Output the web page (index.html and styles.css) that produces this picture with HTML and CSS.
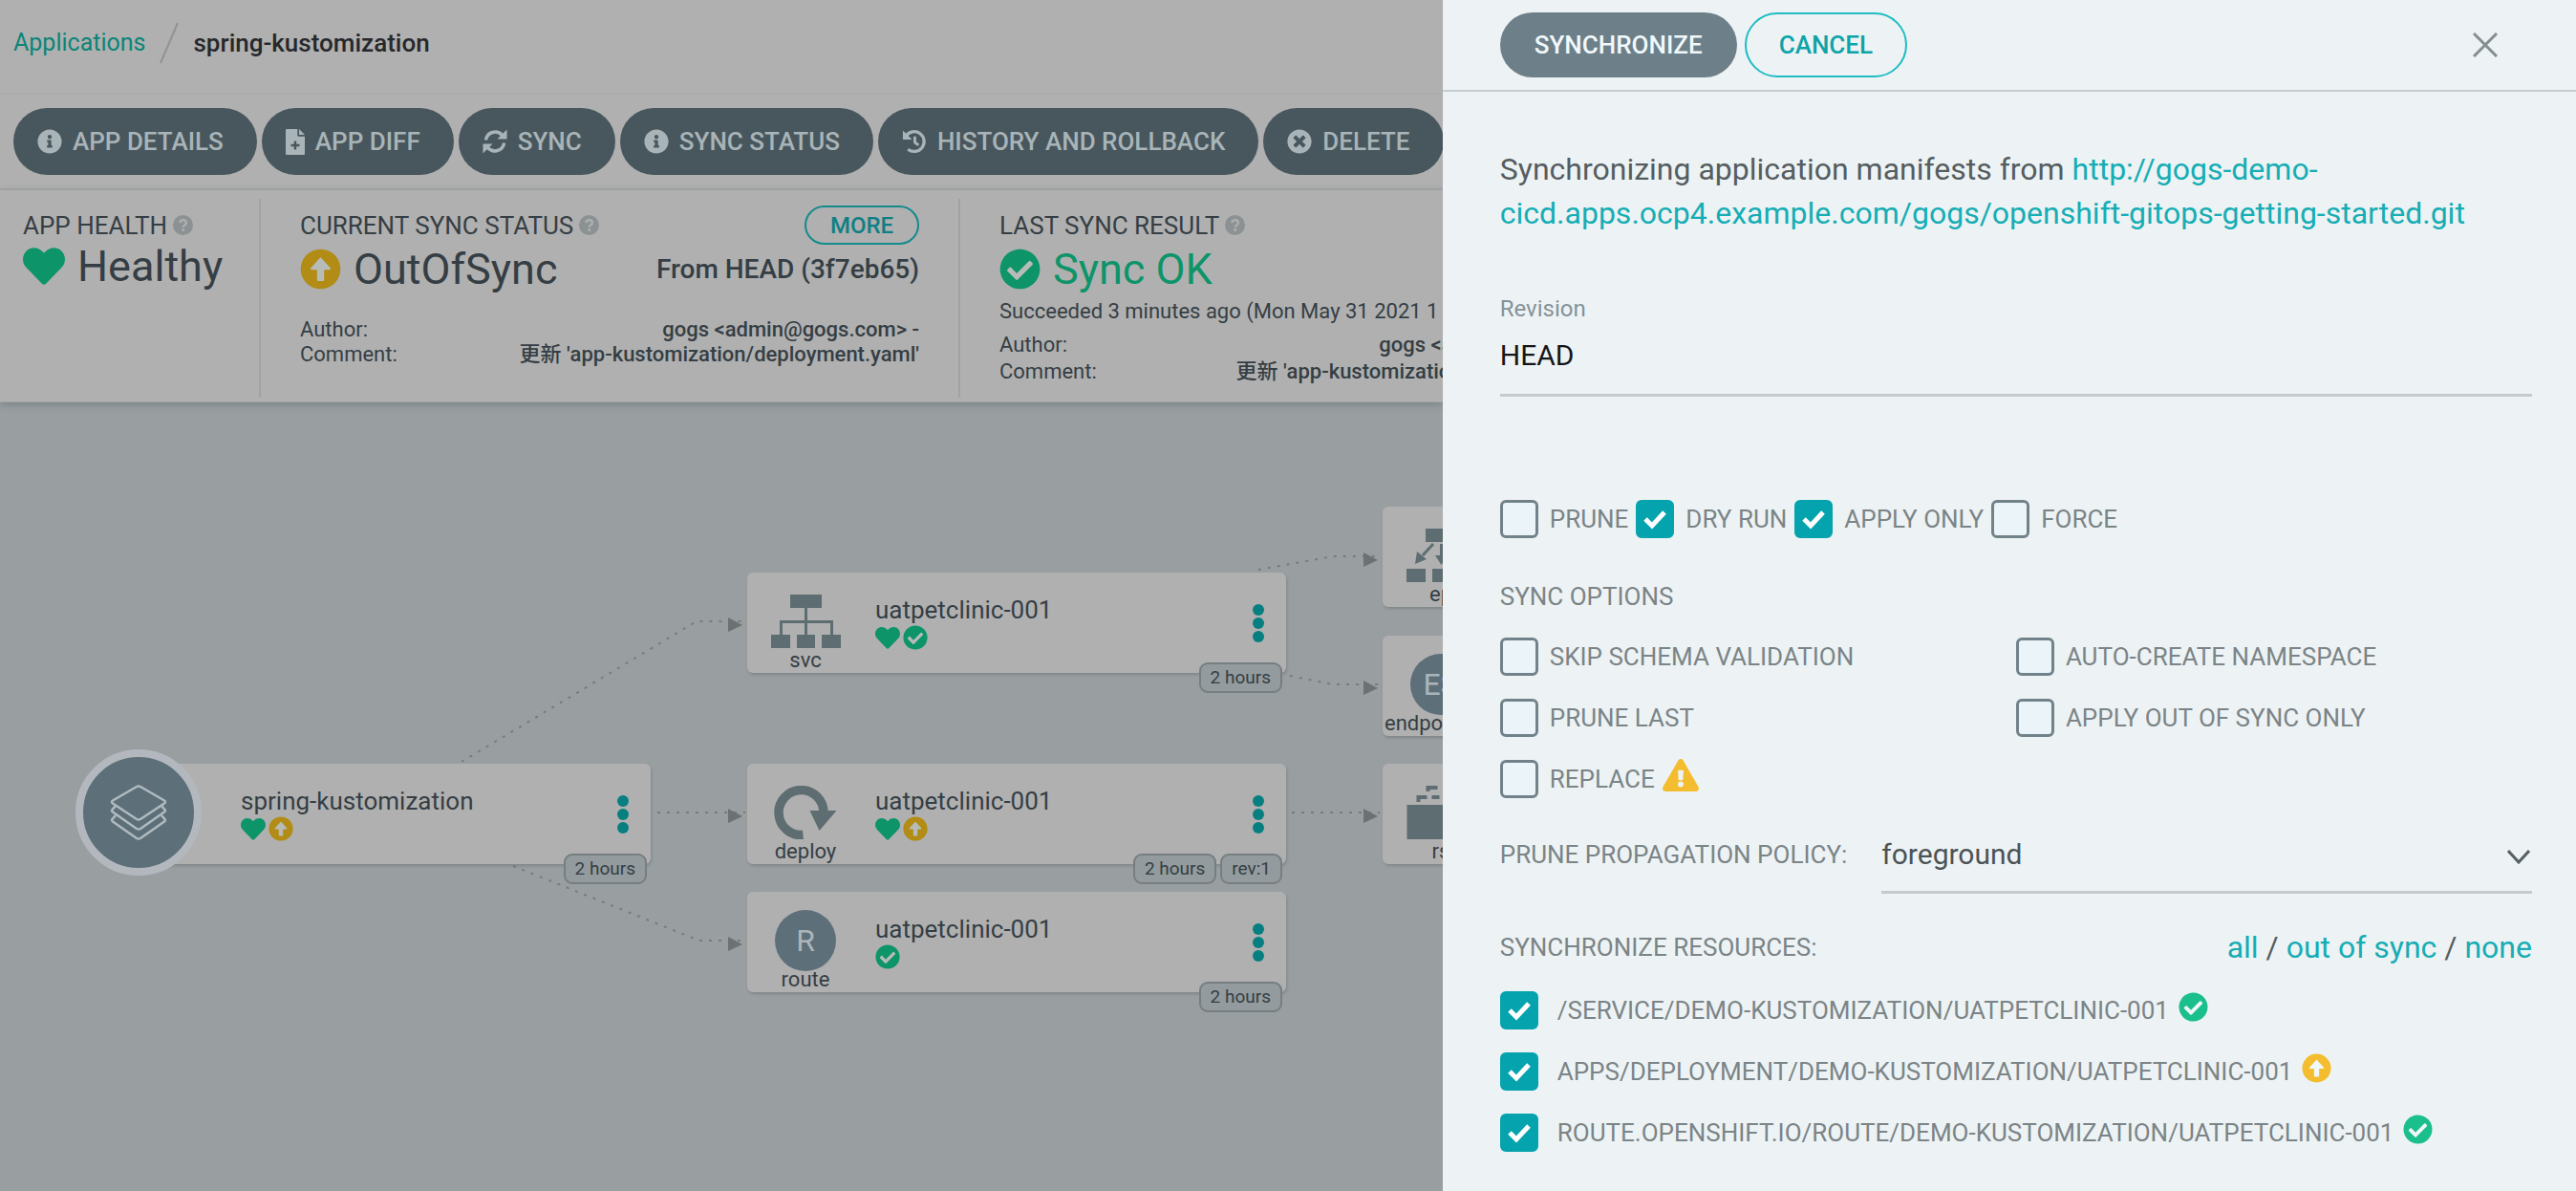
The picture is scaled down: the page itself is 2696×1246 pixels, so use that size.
FILE: index.html
```html
<!DOCTYPE html>
<html lang="en">
<head>
<meta charset="utf-8">
<title>spring-kustomization</title>
<link rel="stylesheet" href="styles.css">
</head>
<body>
<svg class="defs" aria-hidden="true">
  <symbol id="i-info" viewBox="0 0 512 512"><path d="M256 8C119.043 8 8 119.083 8 256c0 136.997 111.043 248 248 248s248-111.003 248-248C504 119.083 392.957 8 256 8zm0 110c23.196 0 42 18.804 42 42s-18.804 42-42 42-42-18.804-42-42 18.804-42 42-42zm56 254c0 6.627-5.373 12-12 12h-88c-6.627 0-12-5.373-12-12v-24c0-6.627 5.373-12 12-12h12v-64h-12c-6.627 0-12-5.373-12-12v-24c0-6.627 5.373-12 12-12h64c6.627 0 12 5.373 12 12v100h12c6.627 0 12 5.373 12 12v24z"/></symbol>
  <symbol id="i-check" viewBox="0 0 512 512"><path fill="currentColor" d="M504 256c0 136.967-111.033 248-248 248S8 392.967 8 256 119.033 8 256 8s248 111.033 248 248z"/><path fill="var(--mark)" d="M227.314 387.314l184-184c6.248-6.248 6.248-16.379 0-22.627l-22.627-22.627c-6.248-6.249-16.379-6.249-22.628 0L216 308.118l-70.059-70.059c-6.248-6.248-16.379-6.248-22.628 0l-22.627 22.627c-6.248 6.248-6.248 16.379 0 22.627l104 104c6.249 6.249 16.379 6.249 22.628.001z"/></symbol>
  <symbol id="i-up" viewBox="0 0 512 512"><circle cx="256" cy="256" r="248" fill="currentColor"/><path fill="var(--mark)" d="M212 392V264h-66c-14 0-20-14-11-24L246 118c6-6 14-6 20 0l111 122c9 10 3 24-11 24h-66v128c0 8-6 14-14 14h-60c-8 0-14-6-14-14z"/></symbol>
  <symbol id="i-heart" viewBox="0 20 512 460"><path d="M462.3 62.6C407.5 15.9 326 24.3 275.7 76.2L256 96.5l-19.7-20.3C186.1 24.3 104.5 15.9 49.7 62.6c-62.8 53.6-66.1 149.8-9.9 207.9l193.5 199.8c12.5 12.9 32.8 12.9 45.3 0l193.5-199.8c56.3-58.1 53-154.3-9.8-207.9z"/></symbol>
  <symbol id="i-times" viewBox="0 0 512 512"><path d="M256 8C119 8 8 119 8 256s111 248 248 248 248-111 248-248S393 8 256 8zm121.6 313.1c4.7 4.7 4.7 12.3 0 17L338 377.6c-4.7 4.7-12.3 4.7-17 0L256 312l-65.1 65.6c-4.7 4.7-12.3 4.7-17 0L134.4 338c-4.7-4.7-4.7-12.3 0-17l65.6-65-65.6-65.1c-4.7-4.7-4.7-12.3 0-17l39.6-39.6c4.7-4.7 12.3-4.7 17 0l65 65.7 65.1-65.6c4.7-4.7 12.3-4.7 17 0l39.6 39.6c4.7 4.7 4.7 12.3 0 17L312 256l65.6 65.1z"/></symbol>
  <symbol id="i-warn" viewBox="0 0 576 512"><path d="M569.517 440.013C587.975 472.007 564.806 512 527.94 512H48.054c-36.937 0-59.999-40.055-41.577-71.987L246.423 23.985c18.467-32.009 64.72-31.951 83.154 0l239.94 416.028zM288 354c-25.405 0-46 20.595-46 46s20.595 46 46 46 46-20.595 46-46-20.595-46-46-46zm-43.673-165.346l7.418 136c.347 6.364 5.609 11.346 11.982 11.346h48.546c6.373 0 11.635-4.982 11.982-11.346l7.418-136c.375-6.874-5.098-12.654-11.982-12.654h-63.383c-6.884 0-12.356 5.78-11.981 12.654z"/></symbol>
  <symbol id="i-file" viewBox="0 0 20 27"><path fill-rule="evenodd" d="M1.300 0H12.300V6.500C12.300 7.300 12.800 7.800 13.600 7.800H20V25.700C20 26.400 19.400 27 18.700 27H1.300C.6 27 0 26.400 0 25.700V1.300C0 .6.600 0 1.300 0zM8.800 12.500V15.800H5.500V18.200H8.800V21.500H11.200V18.200H14.500V15.800H11.200V12.500z"/><path d="M14 0l6 6h-6z"/></symbol>
  <symbol id="i-sync" viewBox="0 0 27 27"><path d="M3.500 12A10.300 10.300 0 0 1 21.500 6.800M23.500 15A10.300 10.300 0 0 1 5.500 20.200" fill="none" stroke="currentColor" stroke-width="3.600"/><path d="M26.500 0.500v10.500h-10.500zM0.500 26.500V16H11z"/></symbol>
  <symbol id="i-history" viewBox="0 0 27 27"><path d="M4.500 7.200A10.800 10.800 0 1 1 6.500 22" fill="none" stroke="currentColor" stroke-width="3.400"/><path d="M1 1.500v10h10z"/><path d="M14 8v6.500l4 3" fill="none" stroke="currentColor" stroke-width="3"/></symbol>
  <symbol id="i-help" viewBox="0 0 22 22"><circle cx="11" cy="11" r="11"/><path d="M7.600 8.300c.5-2 1.800-2.900 3.500-2.900 2 0 3.500 1.200 3.500 3 0 2.700-3.400 2.700-3.400 5" fill="none" stroke="#b0b0b0" stroke-width="2.400"/><circle cx="11.200" cy="16.200" r="1.600" fill="#b0b0b0"/></symbol>
  <symbol id="i-layers" viewBox="0 0 60 60"><g fill="none" stroke="currentColor" stroke-width="2.500" stroke-linejoin="round"><path d="M28 3L3 17.500q-2 1.500 0 3L28 37q2 1.200 4 0l25-16.500q2-1.500 0-3L32 3q-2-1.200-4 0z"/><path d="M6 23l-3 3.500q-2 1.500 0 3L28 47q2 1.200 4 0l25-17.500q2-1.500 0-3L54 23"/><path d="M6 33l-3 3.500q-2 1.500 0 3L28 57q2 1.200 4 0l25-17.500q2-1.500 0-3L54 33"/></g></symbol>
  <symbol id="i-svc" viewBox="0 0 73 56"><path d="M20 0h33v14H20zM0 42h20v14H0zM27 42h19v14H27zM53 42h20v14H53z"/><path d="M36.500 14v28M10.500 42V28.500h53V42" fill="none" stroke="currentColor" stroke-width="3"/></symbol>
  <symbol id="i-deploy" viewBox="0 0 64 56"><path d="M29 51.500A23.500 23.500 0 1 1 50.500 28" fill="none" stroke="currentColor" stroke-width="9.500"/><path d="M36 26h28L46 47z"/></symbol>
  <symbol id="i-ep" viewBox="0 0 73 56"><path d="M20 0h33v14H20zM0 42h20v14H0zM27 42h19v14H27zM53 42h20v14H53z"/><path d="M9 37l2-13 10 8zM30 28h13l-6.500 10zM64 37l-2-13-10 8z"/><path d="M28 16L17 28M36.500 16v14M45 16l11 12" fill="none" stroke="currentColor" stroke-width="3"/></symbol>
  <symbol id="i-rs" viewBox="0 0 72 56"><path d="M0 20h50v36H0z"/><path d="M12 17v-5h9M26 12h8M46 12h9v9M22 6V2h10M38 2h8M56 2h9v8M65 18v10h-7" fill="none" stroke="currentColor" stroke-width="4"/></symbol>
</svg>

<div class="app">
  <main class="page">
    <nav class="crumbs" aria-label="Breadcrumb">
      <a href="#">Applications</a>
      <svg class="slash" viewBox="0 0 20 44" aria-hidden="true"><path d="M19 1L1 43"/></svg>
      <span>spring-kustomization</span>
    </nav>
    <div class="toolbar">
      <button class="tool"><svg class="ic"><use href="#i-info"/></svg>APP DETAILS</button>
      <button class="tool"><svg class="ic file"><use href="#i-file"/></svg>APP DIFF</button>
      <button class="tool"><svg class="ic"><use href="#i-sync"/></svg>SYNC</button>
      <button class="tool"><svg class="ic"><use href="#i-info"/></svg>SYNC STATUS</button>
      <button class="tool"><svg class="ic"><use href="#i-history"/></svg>HISTORY AND ROLLBACK</button>
      <button class="tool"><svg class="ic"><use href="#i-times"/></svg>DELETE</button>
    </div>
    <div class="summary">
      <section class="cell health">
        <h2>APP HEALTH <svg class="help"><use href="#i-help"/></svg></h2>
        <p class="state"><svg class="heart"><use href="#i-heart"/></svg>Healthy</p>
      </section>
      <section class="cell current">
        <div class="head"><h2>CURRENT SYNC STATUS <svg class="help"><use href="#i-help"/></svg></h2><button class="more">MORE</button></div>
        <div class="head"><p class="state"><svg class="dot warn"><use href="#i-up"/></svg>OutOfSync</p><b class="from">From HEAD (3f7eb65)</b></div>
        <dl class="meta">
          <dt>Author:</dt><dd>gogs &lt;admin@gogs.com&gt; -</dd>
          <dt>Comment:</dt><dd>更新 'app-kustomization/deployment.yaml'</dd>
        </dl>
      </section>
      <section class="cell last">
        <div class="head"><h2>LAST SYNC RESULT <svg class="help"><use href="#i-help"/></svg></h2></div>
        <p class="state good"><svg class="dot"><use href="#i-check"/></svg>Sync OK</p>
        <p class="when">Succeeded 3 minutes ago (Mon May 31 2021 1</p>
        <dl class="meta">
          <dt>Author:</dt><dd>gogs &lt;admin@gogs.com&gt; -</dd>
          <dt>Comment:</dt><dd>更新 'app-kustomization/deployment.yaml'</dd>
        </dl>
      </section>
    </div>
    <div class="canvas">
      <svg class="edges" aria-hidden="true">
        <g class="lines">
          <path d="M483 376L729 229H780"/><path d="M688 429H780"/><path d="M537 485L732 563H780"/>
          <path d="M1317 175L1395 161H1444"/><path d="M1350 286L1395 295H1444"/><path d="M1352 429H1444"/>
        </g>
        <path d="M762 225l15 8-15 7zM762 425l15 8-15 7zM762 559l15 8-15 7zM1427 157l15 8-15 7zM1427 291l15 8-15 7zM1427 425l15 8-15 7z"/>
      </svg>
      <article class="node root n-root">
        <div class="ball"><svg class="layers"><use href="#i-layers"/></svg></div>
        <div class="body"><span class="name">spring-kustomization</span><span class="marks"><svg class="mheart"><use href="#i-heart"/></svg><svg class="mdot warn"><use href="#i-up"/></svg></span></div>
        <button class="kebab" aria-label="Actions"><i></i><i></i><i></i></button>
        <div class="tags"><span>2 hours</span></div>
      </article>
      <article class="node n-svc">
        <div class="kind"><svg class="kic"><use href="#i-svc"/></svg><span>svc</span></div>
        <div class="body"><span class="name">uatpetclinic-001</span><span class="marks"><svg class="mheart"><use href="#i-heart"/></svg><svg class="mdot"><use href="#i-check"/></svg></span></div>
        <button class="kebab" aria-label="Actions"><i></i><i></i><i></i></button>
        <div class="tags"><span>2 hours</span></div>
      </article>
      <article class="node n-deploy">
        <div class="kind"><svg class="kic"><use href="#i-deploy"/></svg><span>deploy</span></div>
        <div class="body"><span class="name">uatpetclinic-001</span><span class="marks"><svg class="mheart"><use href="#i-heart"/></svg><svg class="mdot warn"><use href="#i-up"/></svg></span></div>
        <button class="kebab" aria-label="Actions"><i></i><i></i><i></i></button>
        <div class="tags"><span>2 hours</span><span>rev:1</span></div>
      </article>
      <article class="node n-route">
        <div class="kind"><div class="letter">R</div><span>route</span></div>
        <div class="body"><span class="name">uatpetclinic-001</span><span class="marks"><svg class="mdot"><use href="#i-check"/></svg></span></div>
        <button class="kebab" aria-label="Actions"><i></i><i></i><i></i></button>
        <div class="tags"><span>2 hours</span></div>
      </article>
      <article class="node n-ep"><div class="kind"><svg class="kic"><use href="#i-ep"/></svg><span>ep</span></div></article>
      <article class="node n-slice"><div class="kind"><div class="letter">ES</div><span>endpointslice</span></div></article>
      <article class="node n-rs"><div class="kind"><svg class="kic"><use href="#i-rs"/></svg><span>rs</span></div></article>
    </div>
  </main>

  <aside class="panel">
    <header class="bar">
      <button class="primary">SYNCHRONIZE</button>
      <button class="outline">CANCEL</button>
      <button class="close" aria-label="Close"><svg viewBox="0 0 26 26"><path d="M1 1l24 24M25 1L1 25"/></svg></button>
    </header>
    <form class="form">
      <p class="intro">Synchronizing application manifests from <a href="#">http://gogs-demo-cicd.apps.ocp4.example.com/gogs/openshift-gitops-getting-started.git</a></p>
      <div class="field">
        <label for="rev">Revision</label>
        <input id="rev" type="text" value="HEAD">
      </div>
      <div class="flags">
        <label class="opt"><input type="checkbox">PRUNE</label>
        <label class="opt"><input type="checkbox" checked>DRY RUN</label>
        <label class="opt"><input type="checkbox" checked>APPLY ONLY</label>
        <label class="opt"><input type="checkbox">FORCE</label>
      </div>
      <h3>SYNC OPTIONS</h3>
      <div class="options">
        <label class="opt"><input type="checkbox">SKIP SCHEMA VALIDATION</label>
        <label class="opt"><input type="checkbox">AUTO-CREATE NAMESPACE</label>
        <label class="opt"><input type="checkbox">PRUNE LAST</label>
        <label class="opt"><input type="checkbox">APPLY OUT OF SYNC ONLY</label>
        <label class="opt"><input type="checkbox">REPLACE<svg class="caution"><use href="#i-warn"/></svg></label>
      </div>
      <div class="policy">
        <label for="pol">PRUNE PROPAGATION POLICY:</label>
        <div class="select">
          <select id="pol"><option>foreground</option></select>
          <svg class="chev" viewBox="0 0 24 15" aria-hidden="true"><path d="M1 1l11 12L23 1"/></svg>
        </div>
      </div>
      <div class="reshead">
        <h3>SYNCHRONIZE RESOURCES:</h3>
        <div class="pick"><a href="#">all</a> / <a href="#">out of sync</a> / <a href="#">none</a></div>
      </div>
      <div class="resources">
        <label class="opt"><input type="checkbox" checked>/SERVICE/DEMO-KUSTOMIZATION/UATPETCLINIC-001<svg class="rdot"><use href="#i-check"/></svg></label>
        <label class="opt"><input type="checkbox" checked>APPS/DEPLOYMENT/DEMO-KUSTOMIZATION/UATPETCLINIC-001<svg class="rdot warn"><use href="#i-up"/></svg></label>
        <label class="opt"><input type="checkbox" checked>ROUTE.OPENSHIFT.IO/ROUTE/DEMO-KUSTOMIZATION/UATPETCLINIC-001<svg class="rdot"><use href="#i-check"/></svg></label>
      </div>
    </form>
  </aside>
</div>
</body>
</html>
```
FILE: styles.css
```css
* { box-sizing: border-box; }
body {
  margin: 0;
  font-family: Roboto, "Noto Sans CJK SC", sans-serif;
  font-size: 26px;
  color: #353e44;
  background: #999fa1;
}
h2, h3, p, dl, dd { margin: 0; font-weight: 400; font-size: inherit; }
button, input, select { font: inherit; margin: 0; }
button { cursor: pointer; border: 0; }
a { text-decoration: none; }
svg { display: block; fill: currentColor; flex: none; }
.defs { position: absolute; width: 0; height: 0; }

.app { display: grid; grid-template-columns: 56fr 44fr; min-height: 100vh; }

/* Application page, dimmed behind the panel */
.page {
  --mark: #b8bcb9;
  display: flex;
  flex-direction: column;
  min-width: 0;
  overflow: hidden;
  background: #999fa1;
}
.crumbs {
  display: flex;
  align-items: center;
  height: 99px;
  padding: 0 14px 9px;
  gap: 15px;
  background: #b0b0b0;
  border-bottom: 1px solid #a9abab;
  color: #26282c;
  font-weight: 500;
}
.crumbs a { color: #0b8577; font-size: 25px; font-weight: 400; }
.slash { width: 20px; height: 44px; fill: none; stroke: #8f9494; stroke-width: 2; }
.toolbar {
  display: flex;
  gap: 5px;
  padding: 14px 0 14px 14px;
  background: #b0b0b0;
  border-bottom: 2px solid #a7a9a9;
}
.tool {
  display: flex;
  align-items: center;
  gap: 11px;
  flex: none;
  height: 70px;
  padding: 0 35px 0 25px;
  border-radius: 35px;
  background: #48575d;
  color: #a9b4b8;
  font-weight: 500;
  white-space: nowrap;
}
.ic { width: 26px; height: 26px; }
.ic.file { width: 20px; height: 27px; }
.summary {
  display: flex;
  height: 222px;
  padding: 9px 0 4px;
  background: #b0b0b0;
  border-bottom: 1px solid #a3a6a7;
  box-shadow: 0 2px 8px rgba(60, 70, 75, .35);
}
.cell { flex: none; padding: 7px 41px 0; border-right: 2px solid #9fa3a4; }
.cell h2 { display: flex; align-items: center; gap: 6px; height: 41px; white-space: nowrap; }
.health { width: 273px; padding-left: 24px; padding-right: 0; }
.current { width: 732px; }
.last { width: 748px; border-right: 0; }
.help { width: 21px; height: 21px; color: #8c9293; }
.head { display: flex; justify-content: space-between; align-items: center; }
.more {
  width: 120px;
  height: 41px;
  border: 2px solid #138a8c;
  border-radius: 21px;
  background: none;
  color: #0e7f84;
  font-size: 24px;
  font-weight: 500;
  padding: 0;
}
.state { display: flex; align-items: center; gap: 13px; height: 44px; font-size: 45px; }
.current .state, .last .state { height: 50px; }
.heart { width: 44px; height: 40px; color: #0d9469; }
.dot { width: 43px; height: 43px; color: #0d9469; }
.warn { color: #b28c14; }
.good { color: #0d9469; }
.from { font-size: 28px; font-weight: 500; }
.meta {
  display: grid;
  grid-template-columns: auto 1fr;
  font-size: 22px;
  line-height: 26px;
}
.current .meta { padding-top: 26px; }
.last .meta { line-height: 28px; padding-top: 8px; }
.meta dd { text-align: right; font-weight: 500; white-space: nowrap; }
.when { padding-top: 7px; font-size: 22px; line-height: 26px; white-space: nowrap; }

.canvas { position: relative; flex: 1; min-height: 800px; }
.edges { position: absolute; inset: 0; width: 100%; height: 100%; color: #6c7172; }
.lines { fill: none; stroke: #777d7e; stroke-width: 2; stroke-dasharray: 3 7; }
.node {
  position: absolute;
  left: 782px;
  display: flex;
  width: 564px;
  height: 105px;
  border-radius: 6px;
  background: #b0b0b0;
  box-shadow: 1px 2px 3px rgba(90, 100, 105, .4);
}
.n-root { left: 145px; top: 378px; width: 536px; }
.n-svc { top: 178px; }
.n-deploy { top: 378px; }
.n-route { top: 512px; }
.n-ep { left: 1447px; top: 109px; }
.n-slice { left: 1447px; top: 244px; }
.n-rs { left: 1447px; top: 378px; }
.kind {
  display: flex;
  flex-direction: column;
  justify-content: flex-end;
  align-items: center;
  width: 122px;
  font-size: 22px;
  line-height: 26px;
}
.kind span { max-width: 118px; white-space: nowrap; }
.kic { width: 73px; height: 56px; color: #5d6d71; }
.letter {
  display: grid;
  place-items: center;
  width: 64px;
  height: 64px;
  margin-bottom: -4px;
  border-radius: 50%;
  background: #5d6f78;
  color: #aab5ba;
  font-size: 32px;
}
.body { flex: 1; padding: 23px 0 0 12px; }
.name { display: block; line-height: 32px; }
.marks { display: flex; gap: 3px; }
.mheart { width: 26px; height: 24px; color: #0d9469; margin-top: 1px; }
.mdot { width: 26px; height: 26px; color: #0d9469; }
.mdot.warn { color: #b28c14; }
.kebab {
  display: flex;
  flex-direction: column;
  gap: 2px;
  align-self: flex-start;
  margin-top: 33px;
  padding: 0 23px 0 0;
  background: none;
}
.kebab i { width: 12px; height: 12px; border-radius: 50%; background: #077f80; }
.tags { position: absolute; right: 4px; bottom: -21px; display: flex; gap: 4px; }
.tags span {
  padding: 0 10px;
  border: 2px solid #767e81;
  border-radius: 9px;
  background: #939b9e;
  font-size: 19px;
  line-height: 28px;
}
.ball {
  position: absolute;
  left: -66px;
  top: -15px;
  display: grid;
  place-items: center;
  width: 132px;
  height: 132px;
  border: 8px solid #b2b8be;
  border-radius: 50%;
  background: #5d6f78;
  color: #b0bbc0;
}
.layers { width: 60px; height: 60px; }
.root .body { padding-left: 107px; }

/* Synchronize panel */
.panel { --mark: #f2f7f7; background: #edf3f4; color: #555d61; min-width: 0; }
.bar {
  display: flex;
  align-items: center;
  gap: 8px;
  height: 96px;
  padding: 0 82px 0 60px;
  border-bottom: 2px solid #c6cdd0;
}
.bar button { font-weight: 500; }
.primary, .outline { height: 68px; border-radius: 34px; padding: 0 36px; }
.primary { background: #6d7f88; color: #f0f8fa; }
.outline { background: none; border: 2px solid #1fbcc4; color: #0da4a9; padding: 0 34px; }
.close { margin-left: auto; padding: 0; background: none; }
.close svg { width: 26px; height: 26px; fill: none; stroke: #848d90; stroke-width: 3; }
.form { padding: 58px 46px 0 60px; }
.intro { font-size: 32px; line-height: 46px; }
.intro a, .pick a { color: #16adb5; }
.field { padding-top: 61px; }
.field label { display: block; font-size: 24px; line-height: 32px; color: #85929a; }
.field input {
  display: block;
  width: 100%;
  height: 76px;
  padding: 0 0 9px;
  border: 0;
  border-bottom: 3px solid #c5caca;
  background: none;
  color: #14171a;
  font-size: 30px;
}
.opt { display: flex; align-items: center; gap: 12px; height: 40px; color: #7b8487; white-space: nowrap; }
.opt input {
  appearance: none;
  flex: none;
  width: 40px;
  height: 40px;
  border: 3px solid #72828a;
  border-radius: 6px;
  background: #eaf4f9;
}
.opt input:checked {
  border-color: #05a3ae;
  background: #05a3ae url("data:image/svg+xml,%3Csvg xmlns='http://www.w3.org/2000/svg' viewBox='0 0 34 34'%3E%3Cpath d='M7 17l7 7L27 10' fill='none' stroke='%23fff' stroke-width='5'/%3E%3C/svg%3E") center / 34px 34px no-repeat;
}
.flags { display: flex; gap: 8px; padding-top: 108px; }
h3 { color: #7b8487; line-height: 32px; }
.form > h3 { margin-top: 45px; }
.options { display: grid; grid-template-columns: 1fr 1fr; row-gap: 24px; padding-top: 27px; }
.caution { width: 38px; height: 34px; margin: -8px 0 0 -4px; color: #f4bd2f; }
.policy { display: flex; gap: 36px; margin-top: 31px; color: #7b8487; }
.policy label { line-height: 56px; white-space: nowrap; }
.select { position: relative; flex: 1; border-bottom: 3px solid #c5caca; height: 69px; }
.select select {
  appearance: none;
  width: 100%;
  height: 54px;
  padding: 0;
  border: 0;
  background: none;
  color: #4b5357;
  font-size: 30px;
}
.chev { position: absolute; right: 2px; top: 23px; width: 24px; height: 15px; fill: none; stroke: #566064; stroke-width: 3; }
.reshead { display: flex; justify-content: space-between; align-items: center; margin-top: 33px; height: 46px; }
.pick { font-size: 32px; }
.resources { display: grid; row-gap: 24px; padding-top: 23px; }
.resources .opt { gap: 20px; }
.rdot { width: 31px; height: 31px; margin: -8px 0 0 -10px; color: #1bbf8b; }
.rdot.warn { color: #f4bd2f; }
```
